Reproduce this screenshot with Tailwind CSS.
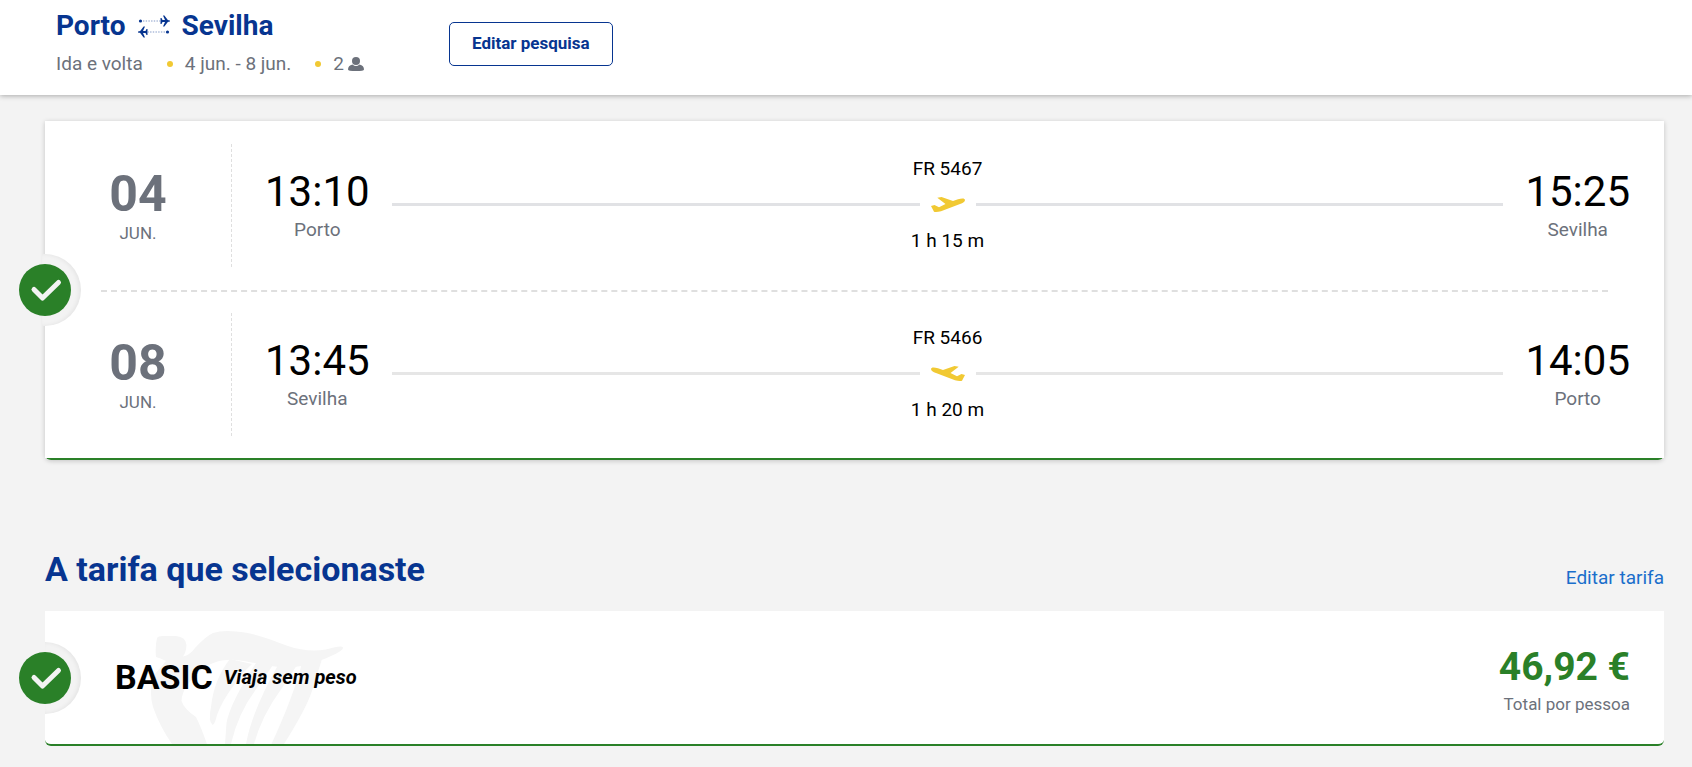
<!DOCTYPE html>
<html lang="pt">

<head>
    <meta charset="UTF-8">
    <meta name="viewport" content="width=device-width, initial-scale=1.0">
    <title>Porto - Sevilha</title>
    <script src="https://cdn.jsdelivr.net/npm/@tailwindcss/browser@4"></script>
</head>

<body class="bg-[#f3f3f3] font-[Roboto,sans-serif] text-black">

    <!-- trip summary -->
    <header class="flex items-center bg-white pt-1.5 pb-[13px] pl-14 shadow-[0_1px_5px_rgba(0,0,0,0.3)]">
        <div class="w-[393px]">
            <h1 class="flex items-center gap-3 text-[28px] leading-10 font-bold text-[#073590]">
                Porto
                <svg class="w-8 h-6" viewBox="0 0 32 24" fill="#073590">
                    <circle cx="2.5" cy="7" r="1.6" />
                    <path d="M5 7h17" stroke="#073590" stroke-opacity=".5" stroke-dasharray="1.4 1.3" />
                    <path d="M22.500 4h1l1 2H27L25 1.500h1.400L29.800 6C31.200 6.100 32 6.500 32 7s-.8.9-2.200 1L26.400 12.500H25L27 8h-2.500l-1 2h-1z" />
                    <circle cx="29.500" cy="18" r="1.600" />
                    <path d="M27 18H10" stroke="#073590" stroke-opacity=".5" stroke-dasharray="1.4 1.3" />
                    <path d="M9.500 15h-1l-1 2H5L7 12.500H5.600L2.200 17C.8 17.100 0 17.500 0 18s.8.9 2.200 1L5.600 23.500H7L5 19h2.500l1 2h1z" />
                </svg>
                Sevilha
            </h1>
            <div class="flex items-center text-[19px] leading-9 text-[#6c717b]">
                <span>Ida e volta</span>
                <span class="w-1.5 h-1.5 ml-6 mr-3 rounded-full bg-[#f1c933]"></span>
                <span>4 jun. - 8 jun.</span>
                <span class="w-1.5 h-1.5 ml-6 mr-3 rounded-full bg-[#f1c933]"></span>
                <span>2</span>
                <svg class="w-4 h-4 ml-1" viewBox="0 0 16 16" fill="#6c717b">
                    <circle cx="8" cy="5" r="4" />
                    <path d="M4.500 8.500Q8 11.500 11.500 8.500 16 9.500 16 13.500q0 1.500-8 1.500t-8-1.500Q0 9.500 4.500 8.500z" />
                </svg>
            </div>
        </div>
        <button type="button" class="h-11 px-[22px] border border-[#073590] rounded-[5px] text-[17px] font-bold text-[#073590]">Editar pesquisa</button>
    </header>

    <main class="pt-[26px] pl-[45px] pr-7">

        <!-- selected flights -->
        <section class="relative border-b-2 border-[#2a8028] rounded-b-[6px] shadow-[0_1px_5px_rgba(0,0,0,0.2)]">
            <div class="flex items-center bg-white py-[23px] pr-[34px]">
                <div class="w-[187px] h-[123px] pt-0.5 flex flex-col items-center justify-center border-r border-dashed border-[#dfdfdf] text-[#6c717b]">
                    <span class="text-[50px] leading-[52px] font-bold">04</span>
                    <span class="text-[17px] leading-[26px]">JUN.</span>
                </div>
                <div class="ml-[33px] text-center">
                    <div class="text-[42px] leading-12">13:10</div>
                    <div class="text-[19px] leading-7 text-[#6c717b]">Porto</div>
                </div>
                <div class="flex-1 px-[22px] pb-0.5 text-center text-[19px] leading-6">
                    <div>FR 5467</div>
                    <div class="flex items-center h-12">
                        <span class="flex-1 h-[3px] bg-[#e1e2e5]"></span>
                        <svg class="w-14 h-6" viewBox="0 0 56 24" fill="#f1c933">
                            <path d="M11 13l3.500-1 4.500 2.200L25.500 11 17.300 4.700 21.500 4 33 8l5-1.800C42 5 45 5 45 7c0 2-2 2.800-5 4L21 18.300c-3 .9-6 .8-7 .5z" />
                        </svg>
                        <span class="flex-1 h-[3px] bg-[#e1e2e5]"></span>
                    </div>
                    <div>1 h 15 m</div>
                </div>
                <div class="text-center">
                    <div class="text-[42px] leading-12">15:25</div>
                    <div class="text-[19px] leading-7 text-[#6c717b]">Sevilha</div>
                </div>
            </div>

            <div class="bg-white px-14">
                <div class="border-t-2 border-dashed border-[#dfdfdf]"></div>
            </div>

            <div class="flex items-center bg-white pt-[21px] pb-[22px] pr-[34px]">
                <div class="w-[187px] h-[123px] pt-0.5 flex flex-col items-center justify-center border-r border-dashed border-[#dfdfdf] text-[#6c717b]">
                    <span class="text-[50px] leading-[52px] font-bold">08</span>
                    <span class="text-[17px] leading-[26px]">JUN.</span>
                </div>
                <div class="ml-[33px] text-center">
                    <div class="text-[42px] leading-12">13:45</div>
                    <div class="text-[19px] leading-7 text-[#6c717b]">Sevilha</div>
                </div>
                <div class="flex-1 px-[22px] pb-0.5 text-center text-[19px] leading-6">
                    <div>FR 5466</div>
                    <div class="flex items-center h-12">
                        <span class="flex-1 h-[3px] bg-[#e6e6e6]"></span>
                        <svg class="w-14 h-6 -scale-x-100" viewBox="0 0 56 24" fill="#f1c933">
                            <path d="M11 13l3.500-1 4.500 2.200L25.500 11 17.300 4.700 21.500 4 33 8l5-1.800C42 5 45 5 45 7c0 2-2 2.800-5 4L21 18.300c-3 .9-6 .8-7 .5z" />
                        </svg>
                        <span class="flex-1 h-[3px] bg-[#e6e6e6]"></span>
                    </div>
                    <div>1 h 20 m</div>
                </div>
                <div class="text-center">
                    <div class="text-[42px] leading-12">14:05</div>
                    <div class="text-[19px] leading-7 text-[#6c717b]">Porto</div>
                </div>
            </div>

            <!-- check badge -->
            <div class="absolute top-1/2 -left-[3px] -translate-y-1/2 w-[39px] h-[72px] rounded-r-[36px] bg-[#f3f3f3] shadow-[inset_-2px_0_4px_rgba(0,0,0,0.06)]"></div>
            <svg class="absolute top-1/2 -left-[26px] -translate-y-1/2 w-[52px] h-[52px]" viewBox="0 0 52 52">
                <circle cx="26" cy="26" r="26" fill="#2a8028" />
                <path d="M15 25.500l8.500 8.500 16-15.500" fill="none" stroke="#f3f3f3" stroke-width="5" stroke-linecap="round" stroke-linejoin="round" />
            </svg>
        </section>

        <!-- selected fare -->
        <div class="flex items-end justify-between mt-[87px] mb-5">
            <h2 class="text-[34px] leading-11 font-bold text-[#073590]">A tarifa que selecionaste</h2>
            <a href="#" class="text-[19px] leading-[26px] text-[#1a6ecb]">Editar tarifa</a>
        </div>

        <section class="relative flex items-center justify-between h-[135px] pl-[70px] pr-[34px] bg-white border-b-2 border-[#2a8028] rounded-b-[6px]">
            <!-- harp -->
            <svg class="absolute bottom-0 left-[103px] w-[197px] h-[115px]" viewBox="0 0 197 115" fill="#f5f5f5">
                <path d="M9 9Q10 7 15 7H28Q38 8 38.500 16 38 24 35 27.500 42 26 47 19 58 7 65 4 74 1 88 2.500C107 4 123 11 140 17 152 21 165 23 178 20.500Q194 16 195 18.500 196 21 183 27C170 33 152 39 136 38.500 112 36 100 32 87 31 72 30 60 35 52 42 40 53 34 62 33.500 72Q36 80 48 88 53 98 59 115H24Q12 98 5 78 0 60 7 45L18 32Q12 29 8 28 7 18 9 9z" />
                <path d="M82 30Q66 50 63 78 60 92 64.600 96 67 95 69 86 74 72 86 56 94 44 104 35z" />
                <path d="M108 34Q82 74 78.500 94L77 115H83Q90 84 109 59L125 36z" />
                <path d="M130 36Q104 82 98 115H106Q114 86 134 59L149 36z" />
                <path d="M154 34Q146 66 123.500 115H136Q158 80 164 62L174 30z" />
            </svg>
            <div class="relative flex items-center gap-[11px] pb-0.5">
                <h3 class="text-[34px] leading-11 font-bold">BASIC</h3>
                <span class="text-xl font-bold italic">Viaja sem peso</span>
            </div>
            <div class="pt-1 text-right">
                <div class="text-[39px] leading-12 font-bold text-[#2a8028]">46,92 €</div>
                <div class="text-[17px] leading-[26px] text-[#6c717b]">Total por pessoa</div>
            </div>

            <!-- check badge -->
            <div class="absolute top-1/2 left-0 -translate-y-1/2 w-9 h-[72px] rounded-r-[36px] bg-[#f3f3f3] shadow-[inset_-2px_0_4px_rgba(0,0,0,0.06)]"></div>
            <svg class="absolute top-1/2 -left-[26px] -translate-y-1/2 w-[52px] h-[52px]" viewBox="0 0 52 52">
                <circle cx="26" cy="26" r="26" fill="#2a8028" />
                <path d="M15 25.500l8.500 8.500 16-15.500" fill="none" stroke="#f3f3f3" stroke-width="5" stroke-linecap="round" stroke-linejoin="round" />
            </svg>
        </section>

    </main>
</body>

</html>
